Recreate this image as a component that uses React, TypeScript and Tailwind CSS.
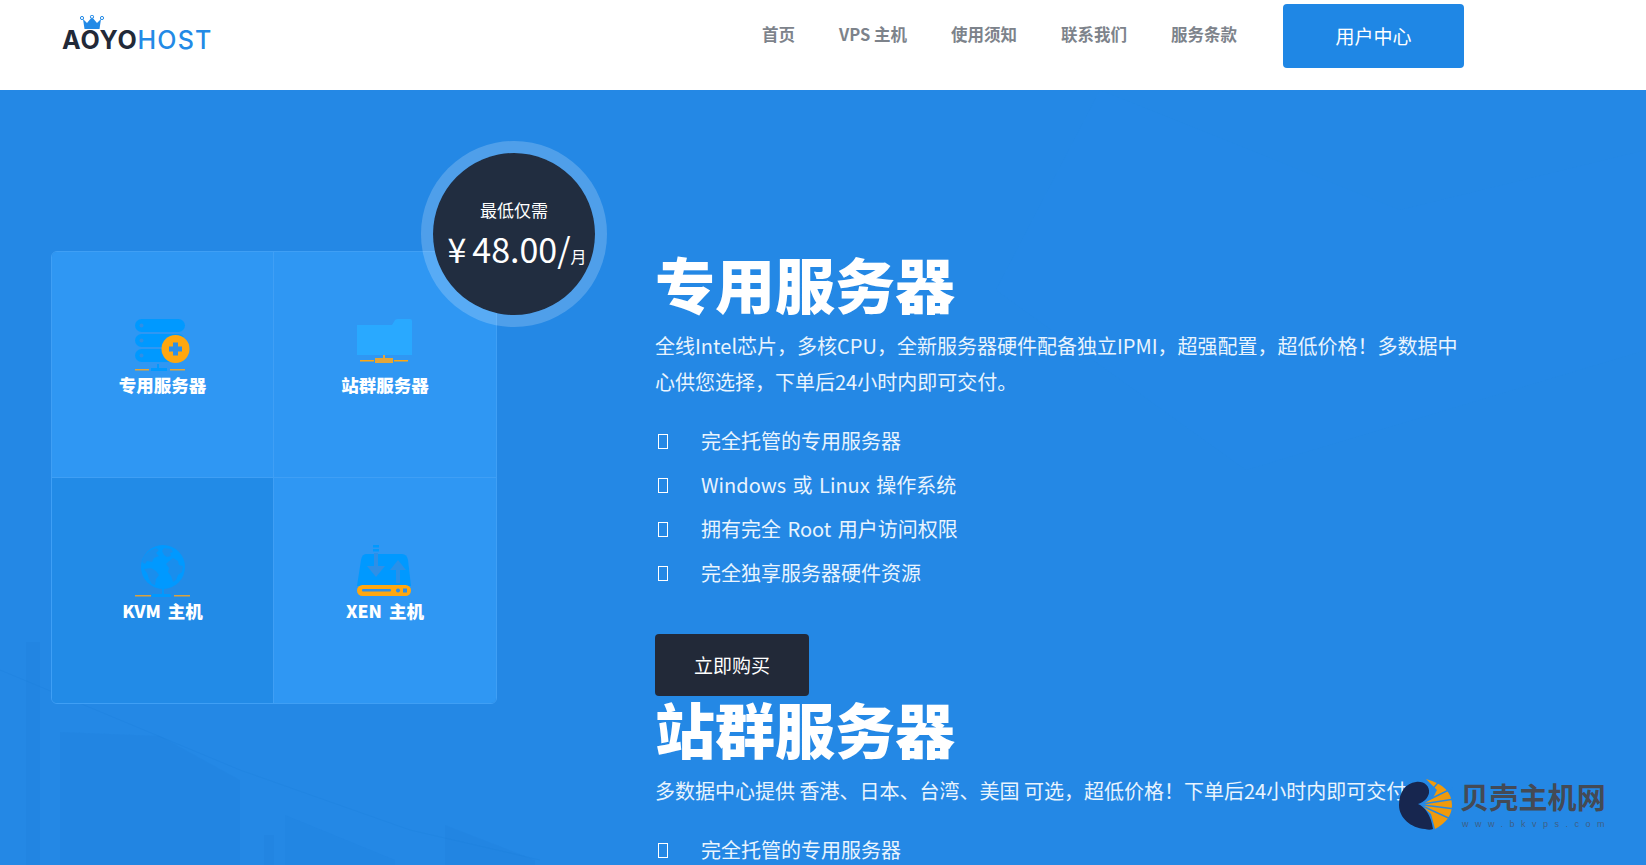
const font = "font-['Noto_Sans_CJK_SC','Noto_Sans',sans-serif]";

const Crown = () => (
	<svg viewBox="0 0 24 14" className="w-[24px] h-[14px]">
		<path d="M3 4l4 4 5-6 5 6 4-4-1.5 10h-15z" fill="#238ae6" />
		<circle cx="2" cy="3" r="1.6" fill="#fff" stroke="#238ae6" />
		<circle cx="12" cy="1.8" r="1.6" fill="#fff" stroke="#238ae6" />
		<circle cx="22" cy="3" r="1.6" fill="#fff" stroke="#238ae6" />
	</svg>
);

const Logo = () => (
	<div className="relative w-[150px] ml-[62px] mt-[-10px] font-['Inter',sans-serif] text-[25px] leading-[30px] flex">
		<div className="absolute left-[18px] top-[-10px]">
			<Crown />
		</div>
		<span className="font-bold text-[#222938] tracking-[0.8px]">AOYO</span>
		<span className="font-medium text-[#238ae6] tracking-[1.2px]">HOST</span>
	</div>
);

const ServerIcon = () => (
	<svg viewBox="0 0 56 56" className="w-[56px] h-[56px]">
		<rect x="0" y="0" width="50" height="13" rx="6.5" fill="#0099ff" />
		<rect x="0" y="15" width="50" height="13" rx="6.5" fill="#0099ff" />
		<rect x="0" y="30" width="50" height="13" rx="6.5" fill="#0099ff" />
		<circle cx="6.5" cy="6.5" r="2" fill="#2f8fe6" />
		<circle cx="6.5" cy="21.5" r="2" fill="#2f8fe6" />
		<circle cx="6.5" cy="36.5" r="2" fill="#2f8fe6" />
		<circle cx="40.5" cy="30" r="14" fill="#ffa70f" />
		<path d="M38 23.500h5v4h4v5h-4v4h-5v-4h-4v-5h4z" fill="#2f8fe6" />
		<rect x="22" y="45" width="2" height="5" fill="#0099ff" />
		<rect x="0" y="50" width="14" height="1.500" fill="#e3a63a" />
		<rect x="16" y="49" width="16" height="3" fill="#0099ff" />
		<rect x="35" y="50" width="15" height="1.500" fill="#e3a63a" />
	</svg>
);

const FolderIcon = () => (
	<svg viewBox="0 0 56 56" className="w-[56px] h-[56px]">
		<path d="M0 6h35l3-5q1-1 3-1h12q2 0 2 2v34h-55z" fill="#29a9ff" />
		<rect x="26" y="36" width="2" height="4" fill="#e3a63a" />
		<rect x="3" y="41" width="14" height="1.500" fill="#ffa70f" />
		<rect x="18" y="39" width="18" height="5" fill="#e3a63a" />
		<rect x="37" y="41" width="14" height="1.500" fill="#ffa70f" />
	</svg>
);

const GlobeIcon = () => (
	<svg viewBox="0 0 56 56" className="w-[56px] h-[56px]">
		<circle cx="28" cy="22" r="22" fill="#0099ff" />
		<path d="M14 6l7-3 3 2-3 3 3 3-5 2-2 4-5-1-2 3-3-2 2-6zM29 3l7 1 2 3-3 1 1 3-4 1-3-2-2-4zM9 24l7-1 5 3 3 4-3 4-1 6-3-1-3-5-2-6zM33 17l5-4 5 3 1 4 4 1-1 6-4 3-2 5-3 2-2-6-3-4 1-4-3-4z" fill="#228be7" fillOpacity="0.75" />
		<rect x="27" y="44" width="2" height="5" fill="#0099ff" />
		<rect x="0" y="50" width="16" height="1.500" fill="#d9a23f" />
		<rect x="17" y="49" width="19" height="3" fill="#0099ff" />
		<rect x="39" y="50" width="16" height="1.500" fill="#d9a23f" />
	</svg>
);

const DriveIcon = () => (
	<svg viewBox="0 0 56 56" className="w-[56px] h-[56px]">
		<path d="M9 9h36q5 0 6 6l3 26h-54l4-26q1-6 5-6z" fill="#0099ff" />
		<rect x="16" y="0" width="6" height="2.500" fill="#0099ff" />
		<rect x="16" y="4" width="6" height="2.500" fill="#0099ff" />
		<path d="M17 8h4v13h7l-9 11-9-11h7z" fill="#2f8fe6" />
		<path d="M39 38v-13h-6l8-10 8 10h-6v13z" fill="#2f8fe6" fillOpacity="0.9" />
		<rect x="0" y="40" width="54" height="11" rx="5.500" fill="#ffa70f" />
		<rect x="5" y="44" width="29" height="2.500" rx="1" fill="#2f8fe6" />
		<circle cx="41" cy="45.500" r="2" fill="#2f8fe6" />
		<rect x="46" y="43.500" width="4" height="4" fill="#2f8fe6" />
	</svg>
);

const Cell = ({ label, icon, dark, right, bottom }: { label: string; icon: React.ReactNode; dark?: boolean; right?: boolean; bottom?: boolean }) => (
	<div
		className={`flex flex-col items-center pt-[67px] border-[#3f9ff5] ${dark ? "bg-[#228be7]" : "bg-[#2f97f3]"} ${right ? "" : "border-r"} ${bottom ? "" : "border-b"}`}
	>
		{icon}
		<span className="mt-[-2px] text-[17.5px] leading-[24px] font-black text-white [word-spacing:3px]">{label}</span>
	</div>
);

const Tile = () => (
	<div className="relative w-[446px]">
		<div className="grid grid-cols-2 grid-rows-[226px_225px] rounded-[6px] overflow-hidden border border-[#3f9ff5]">
			<Cell label="专用服务器" icon={<ServerIcon />} />
			<Cell label="站群服务器" icon={<FolderIcon />} right />
			<Cell label="KVM 主机" icon={<GlobeIcon />} dark bottom />
			<Cell label="XEN 主机" icon={<DriveIcon />} right bottom />
		</div>
		<div className="absolute left-[370px] top-[-110px] w-[186px] h-[186px] rounded-full border-[12px] border-[#ffffff]/20 bg-clip-padding bg-[#212d40] flex flex-col items-center text-white">
			<span className="mt-[45px] text-[17px] leading-[24px]">最低仅需</span>
			<span className="mt-[5px] ml-[6px] text-[34px] leading-[44px] whitespace-nowrap">
				<span className="mr-[6px]">¥</span>48.00/<span className="text-[16px]">月</span>
			</span>
		</div>
	</div>
);

const Item = ({ children }: { children: React.ReactNode }) => (
	<li className="flex items-center h-[44px] text-[20px] text-[#e9f4fe] [word-spacing:2px]">
		<span className="ml-[3px] mr-[33px] w-[10px] h-[15px] border border-white shrink-0" />
		{children}
	</li>
);

const Section = ({ title, desc, items, button }: { title: string; desc: string; items: string[]; button?: boolean }) => (
	<section>
		<h2 className="text-[60px] leading-[64px] font-black text-white">{title}</h2>
		<p className="mt-[13px] w-[810px] text-[20px] leading-[36px] text-[#e9f4fe]">{desc}</p>
		<ul className="mt-[19px]">
			{items.map((t) => (
				<Item key={t}>{t}</Item>
			))}
		</ul>
		{button && (
			<button className="mt-[39px] block w-[154px] h-[62px] rounded-[4px] bg-[#222938] text-[19px] text-white">立即购买</button>
		)}
	</section>
);

// faint city picture behind the hero
const HeroBackdrop = () => (
	<svg className="absolute inset-0 w-full h-full" viewBox="0 0 1646 775" preserveAspectRatio="none">
		<path d="M1100 0l300 120 246-60v200l-400 120-250-180z" fill="#2b8ee8" fillOpacity="0.15" />
		<rect x="26" y="552" width="14" height="223" fill="#1b7bd8" fillOpacity="0.18" />
		<path d="M60 642l100 4 80 44v85h-180z" fill="#1b7bd8" fillOpacity="0.14" />
		<rect x="264" y="745" width="10" height="30" fill="#1b7bd8" fillOpacity="0.18" />
		<path d="M285 725l110 45v5h-110z" fill="#1b7bd8" fillOpacity="0.16" />
		<path d="M445 735l90 35v5h-90z" fill="#1b7bd8" fillOpacity="0.14" />
		<path d="M0 580l240 100 170 60 130 30" fill="none" stroke="#1b7bd8" strokeOpacity="0.2" />
	</svg>
);

const Watermark = () => (
	<div className="absolute left-[1399px] top-[778px] flex">
		<svg viewBox="0 0 54 52" className="w-[54px] h-[52px]">
			<path d="M27 1Q53 8 53 27Q53 42 36 51L32 36L22 27L34 20L38 12Z" fill="#f09a0c" />
			<path d="M20 26.500L56 21M20 26.500L54 10M20 26.500L44 -1M20 26.500L56 31M20 26.500L54 42" stroke="#2488e5" strokeWidth="1.400" />
			<path d="M17 4c8-1 14 4 13 11-1 5-5 9-11 11 7 3 13 11 15 25-2 1-5 1-8 0C12 50 0 40 0 27 0 14 7 5 17 4z" fill="#17264f" />
		</svg>
		<div className="ml-[7px] flex flex-col">
			<span className="text-[29px] leading-[36px] font-bold text-[#444a55] tracking-[0.2px]">贝壳主机网</span>
			<span className="mt-[4px] ml-[2px] font-['Liberation_Sans',sans-serif] text-[9px] leading-[12px] tracking-[6.500px] text-[#3f5f85]">www.bkvps.com</span>
		</div>
	</div>
);

export default function App() {
	return (
		<div className={`relative h-[865px] overflow-hidden bg-[#2488e5] ${font}`}>
			<header className="flex items-center h-[90px] bg-white">
				<Logo />
				<nav className="flex items-center gap-[44px] ml-[550px] mt-[-22px] text-[16.5px] font-bold text-[#7d838b]">
					<a>首页</a>
					<a>VPS 主机</a>
					<a>使用须知</a>
					<a>联系我们</a>
					<a>服务条款</a>
				</nav>
				<button className="ml-[46px] mb-[18px] w-[181px] h-[64px] rounded-[4px] bg-[#1f87e5] text-[19px] text-white">用户中心</button>
			</header>
			<main className="relative flex h-[775px]">
				<HeroBackdrop />
				<div className="relative w-[655px] shrink-0 pl-[51px] pt-[161px]">
					<Tile />
				</div>
				<div className="relative pt-[161px]">
					<Section
						title="专用服务器"
						desc="全线Intel芯片，多核CPU，全新服务器硬件配备独立IPMI，超强配置，超低价格！多数据中心供您选择，下单后24小时内即可交付。"
						items={["完全托管的专用服务器", "Windows 或 Linux 操作系统", "拥有完全 Root 用户访问权限", "完全独享服务器硬件资源"]}
						button
					/>
					<Section
						title="站群服务器"
						desc="多数据中心提供 香港、日本、台湾、美国 可选，超低价格！下单后24小时内即可交付。"
						items={["完全托管的专用服务器"]}
					/>
				</div>
			</main>
			<Watermark />
		</div>
	);
}
